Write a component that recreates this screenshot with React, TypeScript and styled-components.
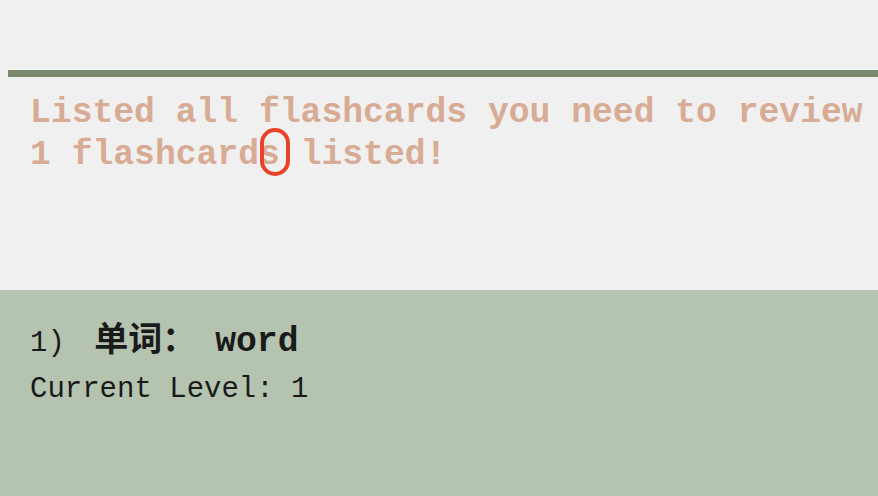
import React from "react";
import styled, { createGlobalStyle } from "styled-components";

const Global = createGlobalStyle`
  html, body { margin: 0; padding: 0; background: #f0f0f0; }
  #root { height: 496px; overflow: hidden; }
`;

const Page = styled.div`
  display: flex;
  flex-direction: column;
  height: 496px;
  font-family: "Liberation Mono", "Noto Sans CJK SC", monospace;
`;

const ResultArea = styled.section`
  height: 290px;
  background: #f0f0f0;
  padding-top: 70px;
  box-sizing: border-box;
  overflow: hidden;
`;

const Bar = styled.div`
  height: 7px;
  margin-left: 8px;
  background: #7b8a6e;
`;

const Message = styled.div`
  padding: 15px 0 0 30px;
  font-size: 34.7px;
  line-height: 42px;
  font-weight: bold;
  color: #d8ab94;
`;

const Line = styled.div`
  white-space: pre;
`;

const Marked = styled.span`
  position: relative;
`;

const Ring = styled.i`
  position: absolute;
  left: 1px;
  top: -7px;
  width: 30px;
  height: 48px;
  box-sizing: border-box;
  border: 4px solid #e8432a;
  border-radius: 15px;
  pointer-events: none;
`;

const ListPanel = styled.section`
  flex: 1;
  background: #b4c4b0;
  padding: 22px 0 0 30px;
  color: #1a1a1a;
`;

const TitleRow = styled.div`
  display: flex;
  align-items: baseline;
  height: 55px;
`;

const Index = styled.span`
  font-size: 29px;
  margin-right: 12px;
  white-space: pre;
`;

const Label = styled.span`
  font-family: "Noto Sans CJK SC", sans-serif;
  font-size: 34px;
  font-weight: bold;
`;

const Value = styled.span`
  font-size: 34.7px;
  font-weight: bold;
  margin-left: 19px;
`;

const Level = styled.div`
  font-size: 29px;
  line-height: 46px;
  white-space: pre;
`;

export default function App() {
  return (
    <>
      <Global />
      <Page>
        <ResultArea>
          <Bar />
          <Message>
            <Line>Listed all flashcards you need to review</Line>
            <Line>
              {"1 flashcard"}
              <Marked>
                s
                <Ring />
              </Marked>
              {" listed!"}
            </Line>
          </Message>
        </ResultArea>
        <ListPanel>
          <TitleRow>
            <Index>{"1) "}</Index>
            <Label>单词：</Label>
            <Value>word</Value>
          </TitleRow>
          <Level>Current Level: 1</Level>
        </ListPanel>
      </Page>
    </>
  );
}
